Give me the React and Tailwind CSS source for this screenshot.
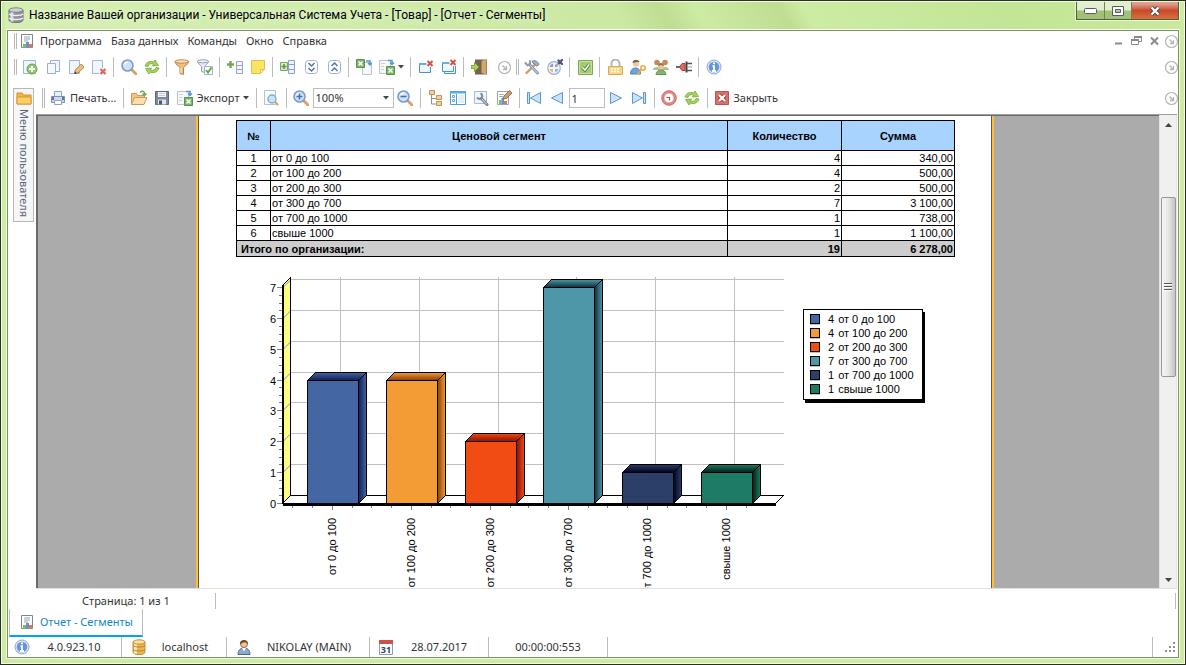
import { useState } from "react";

/* ---------- data ---------- */
const SEGMENTS = [
  { name: "от 0 до 100", count: 4, sum: "340,00", color: "#4466a3", dark: "#0c1f55" },
  { name: "от 100 до 200", count: 4, sum: "500,00", color: "#f39c35", dark: "#8a3c08" },
  { name: "от 200 до 300", count: 2, sum: "500,00", color: "#f14c14", dark: "#8c1005" },
  { name: "от 300 до 700", count: 7, sum: "3 100,00", color: "#4e97a8", dark: "#0c3040" },
  { name: "от 700 до 1000", count: 1, sum: "738,00", color: "#2c3f69", dark: "#02021c" },
  { name: "свыше 1000", count: 1, sum: "1 100,00", color: "#1e7b64", dark: "#022018" },
];

const MENU = ["Программа", "База данных", "Команды", "Окно", "Справка"];

/* ---------- icons, all on a 16px grid ---------- */
const doc = <path d="M1.5 1.5h10v13h-10z" fill="#f1f6fd" stroke="#a3b5d6" />;
const pen = (
  <g>
    <path d="M6.500 14.500l.800-3.500 6-6 3 3-6.300 6z" fill="#e9bf83" stroke="#b08448" />
    <path d="M6.200 15l.800-2.600 1.900 1.900z" fill="#4a3a2a" />
  </g>
);
const cross = <path d="M9.500 10l5 5m0-5l-5 5" stroke="#dc6a5e" strokeWidth="2.400" />;
const chartDoc = (
  <g>
    <path d="M2.500 1.500h11v13h-11z" fill="#fff" stroke="#80868f" />
    <path d="M5 4h6M5 6h6M5 8h4" stroke="#97a0ad" />
    <path d="M4 11h3v4H4z" fill="#7dbb5c" />
    <path d="M7 9h3v6H7z" fill="#5d94d6" />
    <path d="M10 11h3v4h-3z" fill="#e4715b" />
  </g>
);
const lens = (
  <g>
    <path d="M11 11l4 4" stroke="#d6a269" strokeWidth="2.800" strokeLinecap="round" />
    <circle cx="6.500" cy="6.500" r="5.500" fill="#cfe3f8" stroke="#7b9bd0" strokeWidth="1.600" />
    <path d="M3.500 5.500c.5-1.500 2-2.200 3.500-2" fill="none" stroke="#fff" strokeWidth="1.200" />
  </g>
);
const excel = (
  <g>
    <path d="M7.500 7.500h8v8h-8z" fill="#7cb56b" stroke="#559548" />
    <path d="M9.500 9.500l4 4m0-4l-4 4" stroke="#fff" strokeWidth="1.500" />
  </g>
);

const ICONS = {
  report: chartDoc,
  add: (
    <g>
      <path d="M1.500 1.500h12v13h-12z" fill="#eef4fc" stroke="#a3b5d6" />
      <circle cx="10" cy="10" r="5" fill="#94c973" stroke="#66a448" />
      <path d="M10 7v6M7 10h6" stroke="#fff" strokeWidth="2" />
    </g>
  ),
  copy: (
    <g fill="#f4f8fd" stroke="#9cb0d3">
      <path d="M5.500 1.500h9v11h-9z" />
      <path d="M2.500 4.500h8v10h-8z" />
    </g>
  ),
  edit: <g>{doc}{pen}</g>,
  remove: <g>{doc}<path d="M8 9h7v7H8z" fill="#fff" />{cross}</g>,
  find: lens,
  refresh: (
    <g fill="#a5d25a" stroke="#74a638" strokeWidth=".8">
      <path d="M1 7c1-4 5-5.500 8.500-4l1.500-2 3.500 5.500-6 .500 1.200-1.800C6.800 4 4.500 5 4 7.500z" />
      <path d="M15 9c-1 4-5 5.500-8.500 4L5 15 1.500 9.500l6-.500-1.200 1.800c2.900 1.200 5.200.200 5.700-2.300z" />
    </g>
  ),
  filter: (
    <g>
      <path d="M1 2.500c0 3 4.500 5 5 6v6l3.500 1V8.500c.5-1 5-3 5-6z" fill="#efbd84" stroke="#bf8447" />
      <ellipse cx="7.750" cy="2.500" rx="6.800" ry="1.700" fill="#fbe0bd" stroke="#bf8447" />
      <path d="M7 9v5" stroke="#fff0dc" />
    </g>
  ),
  filterOk: (
    <g>
      <path d="M.5 2.500c0 2 3.500 4 4 5v5l3 1V7.500c.5-1 4-3 4-5z" fill="#e6e9f0" stroke="#979eae" />
      <ellipse cx="6" cy="2.300" rx="5.500" ry="1.500" fill="#f6f7fa" stroke="#979eae" />
      <path d="M7.500 7.500h8v8h-8z" fill="#fff" stroke="#9bb2d8" />
      <path d="M9 11l2 2.500 3.500-5" fill="none" stroke="#62ad40" strokeWidth="2" />
    </g>
  ),
  addColumn: (
    <g>
      <path d="M9.500 2.500h6v12h-6zM9.500 6.500h6M9.500 10.500h6" fill="#f2f6fc" stroke="#98a7c6" />
      <path d="M3.500 2v7M0 5.500h7" stroke="#6fae50" strokeWidth="2.400" />
    </g>
  ),
  note: (
    <g>
      <path d="M1.500 1.500h13v9l-4 4h-9z" fill="#fbe464" stroke="#dfc04a" />
      <path d="M10.500 14.500v-4h4z" fill="#fff3a8" stroke="#dfc04a" />
    </g>
  ),
  expandCols: (
    <g>
      <path d="M8.500 1.500h6v13h-6zM8.500 5.500h6M8.500 10.500h6" fill="#eef3fb" stroke="#8f9fc2" />
      <path d="M.5 3.500h7v8h-7z" fill="#d8ebc8" stroke="#7ba563" />
      <path d="M4 5v5M1.500 7.500h5" stroke="#5c9446" strokeWidth="1.500" />
    </g>
  ),
  down: (
    <g fill="none" stroke="#5872a8">
      <rect x="2.500" y="1.500" width="12" height="13" rx="3" fill="#fff" stroke="#9db1d6" />
      <path d="M5.500 4l3 3 3-3M5.500 9l3 3 3-3" strokeWidth="1.500" />
    </g>
  ),
  up: (
    <g fill="none" stroke="#5872a8">
      <rect x="2.500" y="1.500" width="12" height="13" rx="3" fill="#fff" stroke="#9db1d6" />
      <path d="M5.500 7l3-3 3 3M5.500 12l3-3 3 3" strokeWidth="1.500" />
    </g>
  ),
  importXls: (
    <g>
      <path d="M6.500 3.500h9v12h-9z" fill="#f6f8fa" stroke="#bdc3ce" />
      <path d="M.5.500h8v8h-8z" fill="#7cb56b" stroke="#559548" />
      <path d="M2.500 2.500l4 4m0-4l-4 4" stroke="#fff" strokeWidth="1.500" />
      <path d="M10 2h4v4M12 4l2 2 2-2" fill="none" stroke="#5a98d0" strokeWidth="1.500" />
    </g>
  ),
  exportXls: (
    <g>
      <path d="M.5 1.500h11v13H.5z" fill="#f6f8fa" stroke="#bdc3ce" />
      <path d="M2 4.500h4M2 7.500h3M2 10.500h3" stroke="#ccd1d9" />
      {excel}
      <path d="M9 1.500h4v4M11 3.500l2 2 2-2" fill="none" stroke="#5a98d0" strokeWidth="1.500" />
    </g>
  ),
  closeWin: (
    <g>
      <path d="M1.500 4.500h11v9h-11z" fill="#eef7fd" stroke="#4a91cf" />
      <path d="M1 4h12v2H1z" fill="#6aacdf" />
      <path d="M8.500 2h7v6h-7z" fill="#fff" />
      <path d="M9.500 2l5 5m0-5l-5 5" stroke="#d0513c" strokeWidth="2" />
    </g>
  ),
  closeAll: (
    <g>
      <path d="M3.500 6.500h11v8h-11z" fill="#eef7fd" stroke="#4a91cf" />
      <path d="M1.500 3.500h11v9h-11z" fill="#eef7fd" stroke="#4a91cf" />
      <path d="M1 3h12v2H1z" fill="#6aacdf" />
      <path d="M8.500 1h7v6h-7z" fill="#fff" />
      <path d="M9.500 1l5 5m0-5l-5 5" stroke="#d0513c" strokeWidth="2" />
    </g>
  ),
  exit: (
    <g>
      <path d="M4 .500h12v15H4z" fill="#756250" />
      <path d="M10.500 2l5-1.500v15l-5-1.500z" fill="#d2a66c" />
      <path d="M0 6.500h3.500v-3L8 8l-4.500 4.500v-3H0z" fill="#a9d350" stroke="#6f9c2c" strokeWidth=".8" />
    </g>
  ),
  more: (
    <g fill="none" stroke="#b4b4b4">
      <circle cx="8.500" cy="8.500" r="6" strokeWidth="1.200" />
      <path d="M6.500 6.500l4 4M10.500 7v3.500H7" strokeWidth="1.300" />
    </g>
  ),
  tools: (
    <g strokeLinecap="round">
      <path d="M2.500 14L12 4.500" stroke="#cf9c66" strokeWidth="2.400" />
      <path d="M8.500 2c3-1 5.500.5 6.500 3.500L12.500 7 9 4z" fill="#a6afbd" stroke="#757e8d" />
      <path d="M5.500 5.500l8 8.500" stroke="#8f9aad" strokeWidth="3" />
      <path d="M5.500 5.500l8 8.500" stroke="#d3d9e2" strokeWidth="1" />
      <path d="M1.500 4l2 2.300 2.500-1V2" fill="none" stroke="#8f9aad" strokeWidth="2" />
    </g>
  ),
  palette: (
    <g>
      <circle cx="7" cy="9" r="6.300" fill="#f1f4fa" stroke="#9bafd6" strokeWidth="1.200" />
      <path d="M6 8V4.500A4.500 4.500 0 0 0 2.500 8z" fill="#7c9fda" />
      <path d="M8 10v3.500a4.500 4.500 0 0 0 3.500-3.500z" fill="#82bde2" />
      <path d="M6 10v3.500A4.500 4.500 0 0 1 2.500 10z" fill="#f2b566" />
      <path d="M8 8V5l3 3z" fill="#e58463" />
      <path d="M9 7l4-4" stroke="#98a7c2" strokeWidth="2" />
      <path d="M11.500 1.500l3.500 3.500M12 4l3-3" stroke="#4b596f" strokeWidth="2.400" strokeLinecap="round" />
    </g>
  ),
  check: (
    <g>
      <path d="M1.500 1.500h14v14h-14z" fill="#a5cc72" stroke="#7ba850" />
      <path d="M2.500 2.500h12v12h-12z" fill="none" stroke="#c5e09f" />
      <path d="M5.500 8.500l2.500 2.500 4-5.500" fill="none" stroke="#54793a" strokeWidth="3.200" />
      <path d="M5.500 8.500l2.500 2.500 4-5.500" fill="none" stroke="#fff" strokeWidth="1.600" />
    </g>
  ),
  lock: (
    <g>
      <path d="M4.500 8V4.500a4 4 0 0 1 8 0V8" fill="none" stroke="#b3b6bd" strokeWidth="2" />
      <path d="M1.500 7.500h14v8h-14z" fill="#f9d684" stroke="#dba94e" />
      <path d="M4 10h9M4 12.500h9" stroke="#fff" strokeDasharray="2 1" strokeWidth="1.400" />
    </g>
  ),
  userKey: (
    <g>
      <path d="M.5 15c0-4 2-6 5-6s5 2 5 6z" fill="#6aa6da" stroke="#4d7fb2" />
      <circle cx="6" cy="4.500" r="3.200" fill="#f0c9a0" />
      <path d="M2.500 4C3 0 8 0 9.500 3L7 3z" fill="#766152" />
      <circle cx="13" cy="9" r="2.200" fill="#fff" stroke="#e6ac46" strokeWidth="1.600" />
      <path d="M11.500 10.500L8 14.500l1.500 1" fill="none" stroke="#e6ac46" strokeWidth="1.700" />
    </g>
  ),
  users: (
    <g>
      <circle cx="4" cy="3.500" r="2.800" fill="#c08b60" />
      <circle cx="12" cy="3.500" r="2.800" fill="#c08b60" />
      <path d="M0 11c0-4 7-4 8 0 1-4 8-4 8 0z" fill="#a9c58b" />
      <circle cx="8" cy="7.500" r="3" fill="#ebc39b" />
      <path d="M5 7c0-4 6-4 6 0L8 6z" fill="#9c6e49" />
      <path d="M3 15.500c0-6 10-6 10 0z" fill="#86b36f" stroke="#679652" />
    </g>
  ),
  plug: (
    <g>
      <path d="M0 8h4" stroke="#333" strokeWidth="1.500" />
      <path d="M3.500 8L6 4.500h3v7H6z" fill="#dd6b61" stroke="#a8433b" />
      <path d="M10.500 2.500v11" stroke="#444" strokeWidth="2" />
      <path d="M11 4.500h5M11 11.500h5" stroke="#555" strokeWidth="1.500" />
      <path d="M12 8h4" stroke="#999" />
    </g>
  ),
  info: (
    <g>
      <circle cx="8" cy="8" r="7" fill="#dfe8f5" stroke="#8ea7d0" />
      <circle cx="8" cy="8" r="5.300" fill="#6796d8" />
      <path d="M8 3.500v1.800" stroke="#fff" strokeWidth="2" />
      <path d="M6.500 7.200H8V12M6 12h4" fill="none" stroke="#fff" strokeWidth="1.800" />
    </g>
  ),
  print: (
    <g>
      <path d="M4.500 1.500h7v6h-7z" fill="#e5f0fb" stroke="#8aa3cd" />
      <path d="M1.500 6.500h13v6h-13z" fill="#cfd8ea" stroke="#7e8fb5" />
      <path d="M2 7h2v3H2zM12 7h2v3h-2z" fill="#61739a" />
      <path d="M4.500 10.500h7v4h-7z" fill="#fff" stroke="#8fa2c6" />
    </g>
  ),
  open: (
    <g>
      <path d="M.5 14.500v-11h5l1 2h7v3" fill="#f2c57f" stroke="#cf9a58" />
      <path d="M.5 14.500l3-7h12.500l-3 7z" fill="#fbdfae" stroke="#cf9a58" />
      <path d="M9 2.500c2-2 4-1.500 4.500.5V5M11.500 3.500l2 2 2-2" fill="none" stroke="#68a84a" strokeWidth="1.400" />
    </g>
  ),
  save: (
    <g>
      <path d="M1.500 1.500h13v13h-13z" fill="#7d899e" stroke="#5f6a7f" />
      <path d="M4 2h8v5H4z" fill="#f6f8fa" />
      <path d="M5 3.500h6M5 5.500h6" stroke="#c1c8d3" />
      <path d="M4 9.500h8v5H4z" fill="#dfe5ee" />
      <path d="M5 10.500h3v4H5z" fill="#4c5a72" />
    </g>
  ),
  preview: (
    <g>
      <path d="M1.500.500h11v14h-11z" fill="#f8f9fb" stroke="#bac0c9" />
      <path d="M12 12l3 3" stroke="#dea75b" strokeWidth="2.400" />
      <circle cx="9" cy="9" r="4" fill="#c8e5f5" stroke="#7dadd0" strokeWidth="1.400" />
    </g>
  ),
  zoomIn: <g>{lens}<path d="M6.500 3.500v6M3.500 6.500h6" stroke="#4a71b4" strokeWidth="1.600" /></g>,
  zoomOut: <g>{lens}<path d="M3.500 6.500h6" stroke="#4a71b4" strokeWidth="1.600" /></g>,
  tree: (
    <g fill="#f3cf94" stroke="#c4935a">
      <path d="M4.500 5v9H9M4.500 8.500H9" fill="none" stroke="#8e8e8e" />
      <path d="M2.500.500h5v4h-5zM9.500 5.500h5v4h-5zM9.500 11.500h5v4h-5z" />
    </g>
  ),
  panes: (
    <g>
      <path d="M.5 1.500h15v13H.5z" fill="#fff" stroke="#4ba1d5" />
      <path d="M0 1h16v2.500H0z" fill="#54ade2" />
      <path d="M6.500 4v10" stroke="#4ba1d5" />
      <path d="M2.500 5.500h2v2h-2zM2.500 9.500h2v2h-2z" fill="#fff" stroke="#5fa9d6" />
      <path d="M8 5h6v8H8z" fill="#e5eef4" />
    </g>
  ),
  setup: (
    <g>
      <path d="M1.500 1.500h12v12h-12z" fill="#f1f5fb" stroke="#a7b9da" />
      <path d="M8.500 8.500l5.500 6" stroke="#828c9c" strokeWidth="3.200" strokeLinecap="round" />
      <path d="M7.500 3.500a2.800 2.800 0 1 1-3.500 4" fill="none" stroke="#828c9c" strokeWidth="2.200" />
      <path d="M9 9l4.500 5" stroke="#d5dae2" />
    </g>
  ),
  design: (
    <g>
      <path d="M1.500 1.500h11v13h-11z" fill="#fff" stroke="#a0a6b0" />
      <path d="M3 4.500h5M3 6.500h4" stroke="#a8afbb" />
      <path d="M3 10h2.500v4H3z" fill="#7dbb5c" />
      <path d="M5.500 8H8v6H5.500z" fill="#5d94d6" />
      <path d="M8 11h3v3H8z" fill="#e4715b" />
      <path d="M7 9l1-3 5.500-5.500L16 3l-5.500 5.500z" fill="#cf9d65" stroke="#856242" strokeWidth=".8" />
    </g>
  ),
  first: (
    <g fill="#c6e3fa" stroke="#5f94d0">
      <path d="M1.500 2.500h2v11h-2zM14.500 2.500v11L4.500 8z" />
    </g>
  ),
  prev: <path d="M13.500 2.500v11L2.500 8z" fill="#c6e3fa" stroke="#5f94d0" />,
  next: <path d="M2.500 2.500v11L13.500 8z" fill="#c6e3fa" stroke="#5f94d0" />,
  last: (
    <g fill="#c6e3fa" stroke="#5f94d0">
      <path d="M12.500 2.500h2v11h-2zM1.500 2.500v11l10-5.500z" />
    </g>
  ),
  clock: (
    <g>
      <circle cx="8" cy="8" r="6.300" fill="#fff" stroke="#e08883" strokeWidth="2.400" />
      <circle cx="8" cy="8" r="7.300" fill="none" stroke="#c4605b" strokeWidth=".7" />
      <circle cx="8" cy="8" r="4.900" fill="none" stroke="#c4605b" strokeWidth=".5" />
      <path d="M5.500 7.500h3v3" fill="none" stroke="#b04a45" strokeWidth="1.200" />
    </g>
  ),
  closeRed: (
    <g>
      <path d="M1.500 1.500h13v13h-13z" fill="#dd6f68" stroke="#b85551" />
      <path d="M5 5l6 6m0-6l-6 6" stroke="#a0403b" strokeWidth="4" />
      <path d="M5 5l6 6m0-6l-6 6" stroke="#fff" strokeWidth="2.400" />
    </g>
  ),
  folder: (
    <g>
      <path d="M1 14V3h5l1.500 2H15v9z" fill="#f4b63d" stroke="#cf8f26" />
      <path d="M1 14V7h14v7z" fill="#fbcf68" stroke="#d99a2c" />
    </g>
  ),
  database: (
    <g>
      <path d="M2 3v10c0 3.500 12 3.500 12 0V3z" fill="#efb548" stroke="#c18d3a" />
      <path d="M4.500 4v10.500" stroke="#fdeabb" strokeWidth="3" />
      <ellipse cx="8" cy="3" rx="6" ry="2.200" fill="#fbe0a0" stroke="#c18d3a" />
      <path d="M2 6.500c2 2 10 2 12 0M2 10.500c2 2 10 2 12 0" fill="none" stroke="#b9813a" />
    </g>
  ),
  server: (
    <g>
      <path d="M1 3v10c0 3.500 14 3.500 14 0V3z" fill="#8d9399" stroke="#6d737a" />
      <path d="M4 4v10.500" stroke="#d8dde1" strokeWidth="3" />
      <ellipse cx="8" cy="3" rx="7" ry="2.200" fill="#cdd2d6" stroke="#80868c" />
      <path d="M1 7c2 2 12 2 14 0M1 11c2 2 12 2 14 0" fill="none" stroke="#eef1f3" strokeWidth="1.300" />
    </g>
  ),
  user: (
    <g>
      <path d="M2 15.500c0-5 3-6.500 6-6.500s6 1.500 6 6.500z" fill="#8fa7c9" stroke="#4b6590" />
      <path d="M6 9l2 3.500L10 9z" fill="#fff" />
      <circle cx="8" cy="5" r="3.500" fill="#f0c49c" stroke="#8a5a35" strokeWidth=".8" />
      <path d="M4 5.500C3-.5 13-.5 12 5.500L10 3.500H7z" fill="#7c4a28" />
    </g>
  ),
};

function Icon({ name }) {
  return (
    <svg className="size-4 shrink-0" viewBox="0 0 16 16" fill="none" aria-hidden="true">
      {ICONS[name]}
    </svg>
  );
}

function Caret() {
  return (
    <svg className="h-[4px] w-[6px] shrink-0" viewBox="0 0 6 4" aria-hidden="true">
      <path d="M0 0h6L3 3.500z" fill="#444" />
    </svg>
  );
}

/* ---------- toolbar parts ---------- */
function Tool({ icon, label }) {
  return (
    <button type="button" aria-label={label} className="flex h-6 w-[23px] shrink-0 items-center justify-center hover:bg-sky-100">
      <Icon name={icon} />
    </button>
  );
}

function Sep() {
  return <span className="mx-[3px] h-5 w-px shrink-0 bg-[#bdbdbd]" />;
}

function Grip({ tall }) {
  return <span className={`w-[3px] shrink-0 border-x border-[#b8b8b8] ${tall ? "h-5" : "h-4"}`} />;
}

function MoreButton() {
  return (
    <button type="button" aria-label="Настройка панели" className="-mr-px ml-auto shrink-0">
      <Icon name="more" />
    </button>
  );
}

const GROUPS = [
  [["add", "Добавить"], ["copy", "Копировать"], ["edit", "Изменить"], ["remove", "Удалить"]],
  [["find", "Найти"], ["refresh", "Обновить"]],
  [["filter", "Фильтр"], ["filterOk", "Применить фильтр"]],
  [["addColumn", "Добавить столбец"], ["note", "Заметка"]],
  [["expandCols", "Столбцы"], ["down", "Развернуть"], ["up", "Свернуть"]],
];

function MainToolbar() {
  return (
    <div className="flex h-[26px] items-center pl-[6px]">
      <Grip />
      <span className="w-px" />
      {GROUPS.map((group) => (
        <div key={group[0][0]} className="flex items-center">
          {group.map(([icon, label]) => <Tool key={icon} icon={icon} label={label} />)}
          <Sep />
        </div>
      ))}
      <Tool icon="importXls" label="Импорт" />
      <button type="button" aria-label="Экспорт в Excel" className="flex h-6 w-8 items-center gap-[3px] pl-1">
        <Icon name="exportXls" />
        <Caret />
      </button>
      <Sep />
      <Tool icon="closeWin" label="Закрыть окно" />
      <Tool icon="closeAll" label="Закрыть все окна" />
      <Sep />
      <Tool icon="exit" label="Выход" />
      <span className="w-[2px]" />
      <Tool icon="more" label="Ещё" />
      <span className="w-px" />
      <Grip />
      <span className="w-px" />
      <Tool icon="tools" label="Настройки" />
      <Tool icon="palette" label="Оформление" />
      <Sep />
      <Tool icon="check" label="Задачи" />
      <Sep />
      <Tool icon="lock" label="Блокировка" />
      <Tool icon="userKey" label="Права" />
      <Tool icon="users" label="Пользователи" />
      <Tool icon="plug" label="Подключение" />
      <Sep />
      <Tool icon="info" label="О программе" />
      <MoreButton />
    </div>
  );
}

function ReportToolbar() {
  const [zoom, setZoom] = useState("100%");
  const [page, setPage] = useState("1");

  return (
    <div className="flex h-[34px] shrink-0 items-center pt-[2px] pl-[6px]">
      <Grip tall />
      <button type="button" className="flex items-center gap-1 pr-1 pl-[5px]">
        <Icon name="print" /> Печать...
      </button>
      <Sep />
      <Tool icon="open" label="Открыть" />
      <Tool icon="save" label="Сохранить" />
      <button type="button" className="flex items-center gap-[3px] pr-1 pl-1">
        <Icon name="exportXls" /> Экспорт <Caret />
      </button>
      <Sep />
      <Tool icon="preview" label="Просмотр" />
      <Sep />
      <Tool icon="zoomIn" label="Увеличить" />
      <div className="relative">
        <select aria-label="Масштаб" value={zoom} onChange={(e) => setZoom(e.target.value)}
          className="h-5 w-[81px] appearance-none border border-[#bdbdbd] bg-white pl-[2px] outline-none">
          <option>50%</option>
          <option>100%</option>
          <option>200%</option>
        </select>
        <span className="pointer-events-none absolute top-2 right-[5px] flex"><Caret /></span>
      </div>
      <Tool icon="zoomOut" label="Уменьшить" />
      <Sep />
      <Tool icon="tree" label="Структура" />
      <Tool icon="panes" label="Миниатюры" />
      <Tool icon="setup" label="Параметры страницы" />
      <Tool icon="design" label="Дизайнер" />
      <Sep />
      <Tool icon="first" label="Первая страница" />
      <Tool icon="prev" label="Предыдущая страница" />
      <input aria-label="Номер страницы" value={page} onChange={(e) => setPage(e.target.value)}
        className="h-5 w-9 border border-[#bdbdbd] px-[2px] outline-none" />
      <Tool icon="next" label="Следующая страница" />
      <Tool icon="last" label="Последняя страница" />
      <Sep />
      <Tool icon="clock" label="История" />
      <Tool icon="refresh" label="Обновить отчет" />
      <Sep />
      <button type="button" className="flex items-center gap-1 pl-[3px]">
        <Icon name="closeRed" /> Закрыть
      </button>
      <MoreButton />
    </div>
  );
}

/* ---------- report ---------- */
const cell = "border border-black px-[1px] py-0";

function SegmentTable() {
  return (
    <table className="w-full table-fixed border-collapse text-[11px] leading-[14px]">
      <colgroup>
        <col className="w-[34px]" />
        <col />
        <col className="w-[114px]" />
        <col className="w-[113px]" />
      </colgroup>
      <thead>
        <tr className="h-[30px] bg-[#a8d3ff]">
          {["№", "Ценовой сегмент", "Количество", "Сумма"].map((h) => (
            <th key={h} className={cell}>{h}</th>
          ))}
        </tr>
      </thead>
      <tbody>
        {SEGMENTS.map((s, i) => (
          <tr key={s.name} className="h-[15px]">
            <td className={`${cell} text-center`}>{i + 1}</td>
            <td className={cell}>{s.name}</td>
            <td className={`${cell} text-right`}>{s.count}</td>
            <td className={`${cell} text-right`}>{s.sum}</td>
          </tr>
        ))}
        <tr className="h-4 bg-[#cdcdcd] font-bold">
          <td colSpan={2} className="border border-black py-0 pl-1">Итого по организации:</td>
          <td className={`${cell} text-right`}>19</td>
          <td className={`${cell} text-right`}>6 278,00</td>
        </tr>
      </tbody>
    </table>
  );
}

/* 3D bars: the front plane stands on BASE, the back plane is shifted by DEPTH */
const BASE = 233;
const DEPTH = 8;
const yOf = (v) => Math.round(BASE - (v * 216) / 7) + 0.5;
const centerOf = (i) => Math.round(73 + i * 78.8) - 0.5;

function SegmentChart() {
  const values = [0, 1, 2, 3, 4, 5, 6, 7];
  return (
    <svg className="h-[330px] w-[530px] shrink-0" viewBox="0 0 530 330" shapeRendering="crispEdges"
      role="img" aria-label="Количество по ценовым сегментам">
      <defs>
        {SEGMENTS.map((s, i) => (
          <g key={s.name}>
            <linearGradient id={`top${i}`} x1="0" y1="0" x2="0" y2="1">
              <stop offset="0" stopColor={s.color} />
              <stop offset="1" stopColor={s.dark} />
            </linearGradient>
            <linearGradient id={`side${i}`} x1="0" y1="0" x2="1" y2="0">
              <stop offset="0" stopColor={s.dark} />
              <stop offset="1" stopColor={s.color} />
            </linearGradient>
          </g>
        ))}
      </defs>

      {/* back wall */}
      {values.slice(1).map((v) => (
        <path key={v} d={`M30 ${yOf(v) - DEPTH}H524`} stroke="#c0c0c0" />
      ))}
      {SEGMENTS.map((s, i) => (
        <path key={s.name} d={`M${centerOf(i) + DEPTH} 7V225`} stroke="#c0c0c0" />
      ))}

      {/* left wall and floor */}
      <path d="M22.500 15.500l8-8v218l-8 8z" fill="#ffff80" />
      {values.slice(1).map((v) => (
        <path key={v} d={`M23 ${yOf(v)}l8-8`} stroke="#c0c0c0" />
      ))}
      <path d="M22.500 15.500l8-8v218l-8 8M30.500 225.500h493l-8 8" fill="none" stroke="#000" />

      {SEGMENTS.map((s, i) => {
        const left = centerOf(i) - 25;
        const right = left + 51;
        const top = yOf(s.count);
        return (
          <g key={s.name} stroke="#000">
            <path d={`M${left} ${top}l8-8H${right + DEPTH}l-8 8z`} fill={`url(#top${i})`} />
            <path d={`M${right} ${top}l8-8V225.500l-8 8z`} fill={`url(#side${i})`} />
            <path d={`M${left} ${top}H${right}V233.500H${left}z`} fill={s.color} />
          </g>
        );
      })}

      {/* axes */}
      <path d="M22 15h2v219h-2z" />
      <path d="M23 233h493v3H23z" />
      {values.map((v) => (
        <g key={v}>
          <path d={`M17 ${yOf(v)}h5`} stroke="#808080" />
          {v < 7 && [8, 15, 23].map((d) => (
            <path key={d} d={`M19 ${yOf(v) - d}h3`} stroke="#808080" />
          ))}
          <text x="16" y={yOf(v) + 4} textAnchor="end" fontSize="11">{v}</text>
        </g>
      ))}
      {SEGMENTS.map((s, i) => {
        const x = centerOf(i);
        return (
          <g key={s.name}>
            <path d={`M${x} 236v4`} stroke="#808080" />
            {[-40, -20, 20].map((d) => (
              <path key={d} d={`M${x + d} 236v2`} stroke="#808080" />
            ))}
            <text transform={`translate(${x + 3} 248) rotate(-90)`} textAnchor="end" fontSize="11">
              {s.name}
            </text>
          </g>
        );
      })}
    </svg>
  );
}

function Legend() {
  return (
    <ul className="mt-[39px] ml-[13px] h-[91px] w-[120px] shrink-0 border border-black bg-white py-[2px] pl-[6px] text-[11px] leading-[14px] shadow-[2px_3px_0_#000]">
      {SEGMENTS.map((s) => (
        <li key={s.name} className="flex items-center">
          <span className="mr-2 size-[10px] border border-black shadow-[0_1px_0_#c0c0c0]" style={{ background: s.color }} />
          <span className="mr-1">{s.count}</span>
          {s.name}
        </li>
      ))}
    </ul>
  );
}

function ScrollBar() {
  return (
    <div className="flex w-[18px] shrink-0 flex-col items-center border-x border-[#e3e3e3] bg-[#f0f0f0]" aria-hidden="true">
      <svg className="mt-2 h-[4px] w-[7px]" viewBox="0 0 7 4"><path d="M3.500 0L7 4H0z" fill="#444" /></svg>
      <div className="mt-[70px] flex h-[180px] w-[15px] flex-col items-center justify-center gap-px rounded-xs border border-[#979797] bg-linear-to-r from-[#f6f6f6] via-[#e6e6e6] to-[#c4c4c4]">
        <span className="h-[2px] w-2 border-t border-[#555] bg-white" />
        <span className="h-[2px] w-2 border-t border-[#555] bg-white" />
        <span className="h-[2px] w-2 border-t border-[#555] bg-white" />
      </div>
      <svg className="mt-auto mb-[6px] h-[4px] w-[7px]" viewBox="0 0 7 4"><path d="M0 0h7L3.500 4z" fill="#444" /></svg>
    </div>
  );
}

function Viewer() {
  return (
    <div className="mr-px flex min-h-0 flex-1 overflow-hidden border-t border-b border-t-[#a0a0a0] border-b-[#e0e0e0]">
      <div className="flex flex-1 justify-center overflow-hidden border-t border-l-2 border-[#696969] bg-[#ababab] pr-[7px]">
        <div className="flex w-[798px] shrink-0 border-x-2 border-[#ffc132]">
          <div className="w-full border-x border-[#595959] bg-white pt-1 pr-9 pl-[37px] font-['Liberation_Sans',Arial,sans-serif] text-black">
            <SegmentTable />
            <div className="mt-[13px] flex items-start pl-6">
              <SegmentChart />
              <Legend />
            </div>
          </div>
        </div>
      </div>
      <ScrollBar />
    </div>
  );
}

/* ---------- window chrome ---------- */
function TitleBar() {
  return (
    <header className="-mx-px flex h-[27px] shrink-0 items-start bg-[linear-gradient(60deg,#d5efb2_0%,#cbe9a2_52%,#bfde92_56%,#cdeca3_59%,#bfde92_66%,#cdeca3_68%,#c3e596_85%,#c9ea9c_100%)]">
      <div className="flex h-[26px] items-center gap-[5px] pl-[3px]">
        <Icon name="server" />
        <h1 className="font-['Roboto','Noto_Sans',sans-serif] text-[12px] text-black [text-shadow:0_0_8px_#fff]">
          Название Вашей организации - Универсальная Система Учета - [Товар] - [Отчет - Сегменты]
        </h1>
      </div>
      <div className="mr-[2px] ml-auto flex h-[18px] border border-t-0 border-[#4f5f3a] ring-1 ring-[#eaf7d8]">
        <button type="button" aria-label="Свернуть" className="flex w-7 items-center justify-center border-r border-[#6f8354] bg-linear-to-b from-[#e1efcf] from-45% to-[#a3c079] to-55%">
          <svg width="13" height="6" viewBox="0 0 13 6"><rect x=".500" y=".500" width="12" height="5" rx="1" fill="#fff" stroke="#545a66" /></svg>
        </button>
        <button type="button" aria-label="Восстановить" className="flex w-[27px] items-center justify-center border-r border-[#6f8354] bg-linear-to-b from-[#e1efcf] from-45% to-[#a3c079] to-55%">
          <svg width="12" height="10" viewBox="0 0 12 10">
            <path d="M.5.500h11v9H.5zM3.500 3.500v3h5v-3z" fill="#fff" stroke="#545a66" fillRule="evenodd" />
          </svg>
        </button>
        <button type="button" aria-label="Закрыть программу" className="flex w-[46px] items-center justify-center bg-linear-to-b from-[#e0a090] from-10% via-[#c9492a] via-50% to-[#d9703f]">
          <svg width="12" height="10" viewBox="0 0 12 10">
            <path d="M2.500 1.500l7 7m0-7l-7 7" stroke="#4d4048" strokeWidth="4.200" />
            <path d="M2.500 1.500l7 7m0-7l-7 7" stroke="#fff" strokeWidth="2.400" />
          </svg>
        </button>
      </div>
    </header>
  );
}

function MenuBar() {
  return (
    <nav className="flex h-6 shrink-0 items-center pb-[2px] pl-[6px]">
      <Grip />
      <span className="mr-[5px] ml-[2px] flex"><Icon name="report" /></span>
      {MENU.map((m) => (
        <button key={m} type="button" className="mr-[9px] whitespace-nowrap">{m}</button>
      ))}
      <div className="ml-auto flex items-center gap-[7px]">
        <button type="button" aria-label="Свернуть окно">
          <svg width="11" height="10" viewBox="0 0 11 10"><path d="M2 7.500h7" stroke="#8a8a8a" strokeWidth="2" /></svg>
        </button>
        <button type="button" aria-label="Восстановить окно">
          <svg width="11" height="10" viewBox="0 0 11 10" fill="none" stroke="#8a8a8a">
            <path d="M3.500 4V.500h7v5H8M.5 3.500h7v5h-7z" />
            <path d="M3 1h8M0 4h8" strokeWidth="2" />
          </svg>
        </button>
        <button type="button" aria-label="Закрыть отчет">
          <svg width="11" height="10" viewBox="0 0 11 10"><path d="M2 1.500l7 7m0-7l-7 7" stroke="#8a8a8a" strokeWidth="2" /></svg>
        </button>
        <div className="-ml-1 flex"><MoreButton /></div>
      </div>
    </nav>
  );
}

function StatusBar() {
  return (
    <footer className="flex h-5 shrink-0 items-center pl-[6px]">
      <Icon name="info" />
      <span className="w-[88px] text-center">4.0.923.10</span>
      <Sep />
      <span className="ml-[6px] flex"><Icon name="database" /></span>
      <span className="w-[76px] text-center">localhost</span>
      <Sep />
      <span className="ml-[6px] flex"><Icon name="user" /></span>
      <span className="w-[114px] text-center">NIKOLAY (MAIN)</span>
      <Sep />
      <span className="ml-[6px] flex">
        <svg className="h-4 w-[14px]" viewBox="0 0 14 16" aria-hidden="true">
          <path d="M.5 1.500h13v14H.5z" fill="#fff" stroke="#8a9cc0" />
          <path d="M0 1h14v4H0z" fill="#cf5146" />
          <text x="7" y="13.500" textAnchor="middle" fontSize="9" fontWeight="bold" fill="#33415f">31</text>
        </svg>
      </span>
      <span className="w-[92px] text-center">28.07.2017</span>
      <Sep />
      <span className="w-[112px] text-center">00:00:00:553</span>
      <Sep />
      <span className="ml-auto flex items-center gap-2 pr-[2px]">
        <Sep />
        <svg className="size-3" viewBox="0 0 12 12" aria-hidden="true">
          <path d="M9 1h2v2H9zM9 5h2v2H9zM5 5h2v2H5zM9 9h2v2H9zM5 9h2v2H5zM1 9h2v2H1z" fill="#909090" />
        </svg>
      </span>
    </footer>
  );
}

export default function App() {
  return (
    <div className="h-screen border border-[#2a2f20] bg-white font-['Noto_Sans','Open_Sans',sans-serif] text-[11px] text-[#333]">
      <div className="flex h-full flex-col border border-[#f3fbe6] bg-[#cdeca3] px-[4px] pb-[4px]">
        <TitleBar />
        <div className="flex min-h-0 flex-1 flex-col border border-[#f0f9e2] bg-white outline-1 -outline-offset-2 outline-[#7c9260] [border-top-width:0]">
          <div className="flex min-h-0 flex-1 flex-col p-px">
            <MenuBar />
            <MainToolbar />
            <div className="flex min-h-0 flex-1">
              <aside className="w-7 shrink-0 pt-[8px] pl-[5px]">
                <button type="button" className="flex h-[134px] w-[21px] flex-col items-center gap-[3px] border border-[#b8b8b8] bg-[#f6f6f6] pt-px">
                  <Icon name="folder" />
                  <span className="whitespace-nowrap text-[#5b6577] [writing-mode:vertical-rl]">Меню пользователя</span>
                </button>
              </aside>
              <main className="flex min-w-0 flex-1 flex-col">
                <ReportToolbar />
                <Viewer />
              </main>
            </div>
            <div className="flex h-5 shrink-0 items-end pr-[2px]">
              <span className="pl-[74px]">Страница: 1 из 1</span>
              <span className="ml-[45px] h-4 w-px bg-[#bdbdbd]" />
              <span className="ml-auto h-4 w-px bg-[#bdbdbd]" />
            </div>
            <div className="flex h-7 shrink-0 pl-px">
              <button type="button" className="flex w-[134px] items-center gap-[5px] border-x border-b-2 border-x-[#bdbdbd] border-b-[#00a2ff] pl-[9px] text-[#1188cc]">
                <Icon name="report" /> Отчет - Сегменты
              </button>
            </div>
            <StatusBar />
          </div>
        </div>
      </div>
    </div>
  );
}
